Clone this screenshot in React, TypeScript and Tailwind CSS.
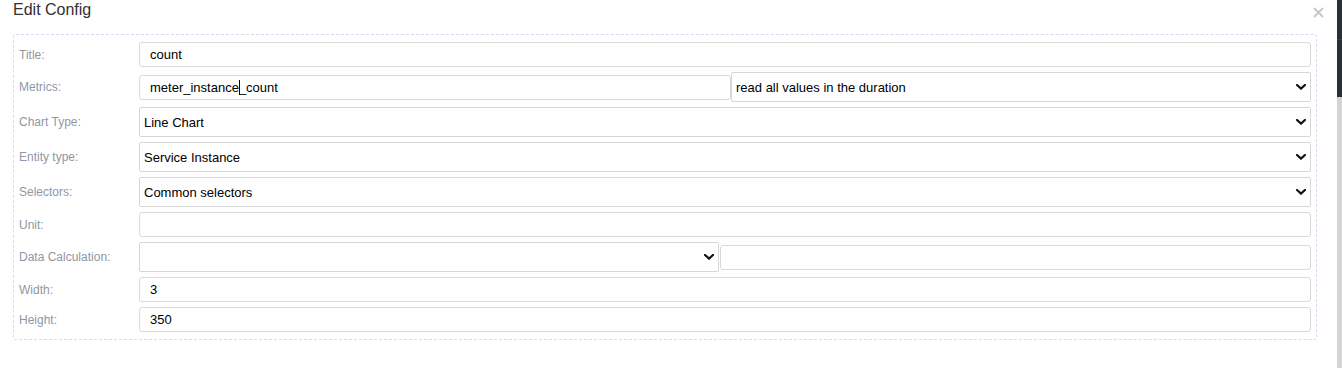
import React from "react";

const font = { fontFamily: '"Liberation Sans", Arial, Helvetica, sans-serif' };

function Chevron() {
  return (
    <svg
      className="pointer-events-none absolute right-[5px] top-1/2 -translate-y-1/2"
      width="10"
      height="6"
      viewBox="0 0 10 6"
      fill="none"
    >
      <path d="M1 1 L5 4.6 L9 1" stroke="#111" strokeWidth="2.2" strokeLinecap="square" />
    </svg>
  );
}

function TextInput({ value, className = "" }: { value: string; className?: string }) {
  return (
    <input
      readOnly
      value={value}
      className={
        "h-[25px] rounded-[3px] border border-[#d9d9d9] bg-white px-[10px] text-[13px] text-black outline-none " +
        className
      }
      style={font}
    />
  );
}

function Select({ value, className = "" }: { value: string; className?: string }) {
  return (
    <div className={"relative h-[30px] " + className}>
      <select
        value={value}
        onChange={() => {}}
        className="h-full w-full appearance-none rounded-[2px] border border-[#d6d6d6] bg-white pl-[4px] pr-6 pt-px text-[13px] text-black outline-none"
        style={font}
      >
        <option value={value}>{value}</option>
      </select>
      <Chevron />
    </div>
  );
}

function Row({ label, children }: { label: string; children: React.ReactNode }) {
  return (
    <div className="flex items-center">
      <div className="w-[120px] shrink-0 text-[12px] text-[#9097a3]">{label}</div>
      <div className="flex flex-1 items-center">{children}</div>
    </div>
  );
}

export default function App() {
  return (
    <div className="flex h-[368px] w-[1342px] bg-white" style={font}>
      <div className="relative flex-1 pl-[13px]">
        <div className="text-[16px] leading-5 text-[#303133]">Edit Config</div>
        <svg
          className="absolute left-[1313px] top-[7px]"
          width="11"
          height="11"
          viewBox="0 0 11 11"
        >
          <path d="M1 1 L10 10 M10 1 L1 10" stroke="#c8c8cc" strokeWidth="2" />
        </svg>
        <div className="mt-[14px] flex w-[1304px] flex-col gap-[5px] rounded-[3px] border border-dashed border-[#dad8ee] pb-[7px] pl-[5px] pr-[5px] pt-[7px]">
          <Row label="Title:">
            <TextInput value="count" className="flex-1" />
          </Row>
          <Row label="Metrics:">
            <div className="relative flex flex-1">
              <TextInput value="meter_instance_count" className="w-full" />
              <span className="absolute left-[100px] top-[5px] h-[15px] w-px bg-black" />
            </div>
            <Select value="read all values in the duration" className="w-[580px]" />
          </Row>
          <Row label="Chart Type:">
            <Select value="Line Chart" className="flex-1" />
          </Row>
          <Row label="Entity type:">
            <Select value="Service Instance" className="flex-1" />
          </Row>
          <Row label="Selectors:">
            <Select value="Common selectors" className="flex-1" />
          </Row>
          <Row label="Unit:">
            <TextInput value="" className="flex-1" />
          </Row>
          <Row label="Data Calculation:">
            <Select value="" className="w-[580px]" />
            <TextInput value="" className="ml-px flex-1" />
          </Row>
          <Row label="Width:">
            <TextInput value="3" className="flex-1" />
          </Row>
          <Row label="Height:">
            <TextInput value="350" className="flex-1" />
          </Row>
        </div>
      </div>
      <div className="flex w-[5px] flex-col">
        <div className="h-[39px] bg-[#2a2e35]" />
        <div className="h-[58px] border-t border-[#3a3e45] bg-[#2a2e35]" />
        <div className="flex-1 bg-[#d4d4d4]" />
      </div>
    </div>
  );
}
